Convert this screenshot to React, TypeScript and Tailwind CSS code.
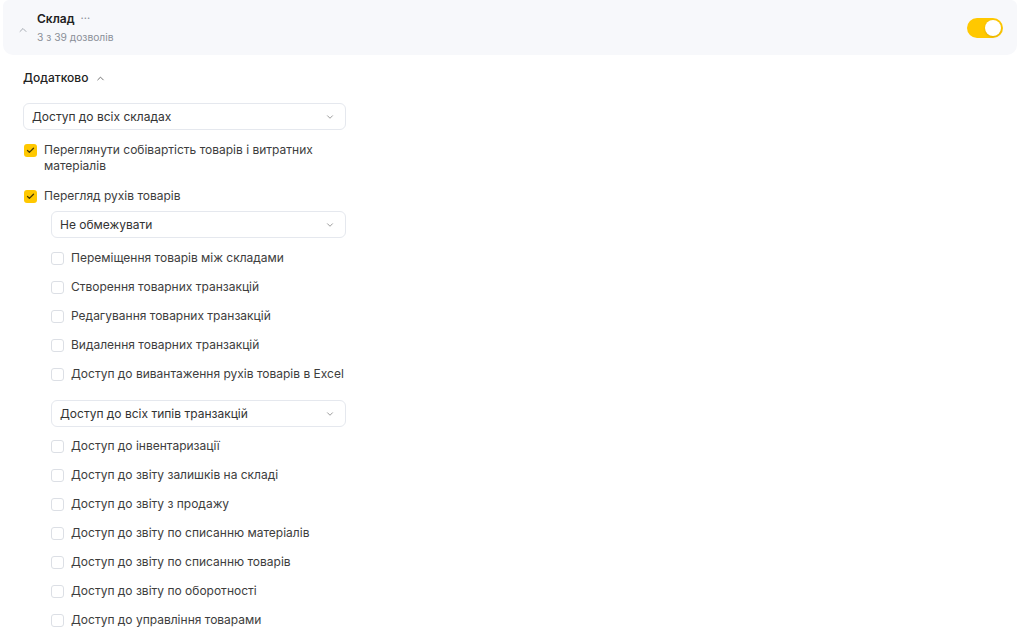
import { ChevronUp, ChevronDown, Check } from 'lucide-react';

const movementItems = [
  'Переміщення товарів між складами',
  'Створення товарних транзакцій',
  'Редагування товарних транзакцій',
  'Видалення товарних транзакцій',
  'Доступ до вивантаження рухів товарів в Excel',
];

const reportItems = [
  'Доступ до інвентаризації',
  'Доступ до звіту залишків на складі',
  'Доступ до звіту з продажу',
  'Доступ до звіту по списанню матеріалів',
  'Доступ до звіту по списанню товарів',
  'Доступ до звіту по оборотності',
  'Доступ до управління товарами',
];

function Box({ checked }: { checked?: boolean }) {
  return checked ? (
    <span className="shrink-0 w-[13px] h-[13px] rounded-[3px] bg-[#ffc800] flex items-center justify-center">
      <Check className="w-[9px] h-[9px] text-[#4a3b00]" strokeWidth={3.5} />
    </span>
  ) : (
    <span className="shrink-0 w-[13px] h-[13px] rounded-[3px] border border-[#dcdfe5] bg-white" />
  );
}

function Select({ label }: { label: string }) {
  return (
    <div className="w-full h-[27px] rounded-[6px] border border-[#e5e8ee] bg-white flex items-center justify-between pl-[8px] pr-[10px]">
      <span className="text-[12px] text-[#333]">{label}</span>
      <ChevronDown className="w-[10px] h-[10px] text-[#888]" strokeWidth={2} />
    </div>
  );
}

export default function App() {
  return (
    <div className="min-h-[639px] bg-white pl-[3px] pr-[7px] text-[#3d3d3d]" style={{ fontFamily: 'Inter, "Noto Sans", sans-serif' }}>
      {/* Section header */}
      <div className="h-[55px] rounded-b-[10px] rounded-t-[6px] bg-[#f7f8fb] flex items-center justify-between pr-[14px]">
        <div className="flex items-center">
          <ChevronUp className="ml-[14px] w-[12px] h-[12px] text-[#9aa0a8] mt-[4px]" strokeWidth={1.75} />
          <div className="ml-[8px] flex flex-col">
            <div className="flex items-center gap-[6px] leading-[16px]">
              <span className="text-[12px] font-semibold text-[#222]">Склад</span>
              <span className="text-[11px] text-[#8a8f98] -mt-[3px]">···</span>
            </div>
            <span className="mt-[3px] text-[10.25px] leading-[14px] text-[#8a8f98]">3 з 39 дозволів</span>
          </div>
        </div>
        <div className="w-[36px] h-[20px] rounded-full bg-[#ffc800] flex items-center justify-end pr-[2px]">
          <span className="w-[16px] h-[16px] rounded-full bg-white shadow-sm" />
        </div>
      </div>

      <div className="pl-[20px]">
        <div className="mt-[13px] h-[20px] flex items-center gap-[7px]">
          <span className="text-[12px] font-medium text-[#222]">Додатково</span>
          <ChevronUp className="w-[11px] h-[11px] text-[#666]" strokeWidth={2} />
        </div>

        <div className="mt-[15px] w-[323px]">
          <Select label="Доступ до всіх складах" />
        </div>

        <div className="mt-[12px] flex items-start gap-[7px]">
          <span className="mt-[2px] ml-[1px]"><Box checked /></span>
          <span className="text-[12px] leading-[16px] w-[290px]">Переглянути собівартість товарів і витратних матеріалів</span>
        </div>

        <div className="mt-[14px] flex items-center gap-[7px] h-[16px]">
          <span className="ml-[1px]"><Box checked /></span>
          <span className="text-[12px] leading-[16px]">Перегляд рухів товарів</span>
        </div>

        <div className="pl-[28px] w-[323px]">
          <div className="mt-[7px]">
            <Select label="Не обмежувати" />
          </div>
          <div className="mt-[12px] flex flex-col gap-[13px]">
            {movementItems.map((t) => (
              <div key={t} className="flex items-center gap-[7px] h-[16px] whitespace-nowrap">
                <Box />
                <span className="text-[12px] leading-[16px]">{t}</span>
              </div>
            ))}
          </div>

          <div className="mt-[18px]">
            <Select label="Доступ до всіх типів транзакцій" />
          </div>
          <div className="mt-[11px] flex flex-col gap-[13px]">
            {reportItems.map((t) => (
              <div key={t} className="flex items-center gap-[7px] h-[16px] whitespace-nowrap">
                <Box />
                <span className="text-[12px] leading-[16px]">{t}</span>
              </div>
            ))}
          </div>
        </div>
      </div>
    </div>
  );
}
